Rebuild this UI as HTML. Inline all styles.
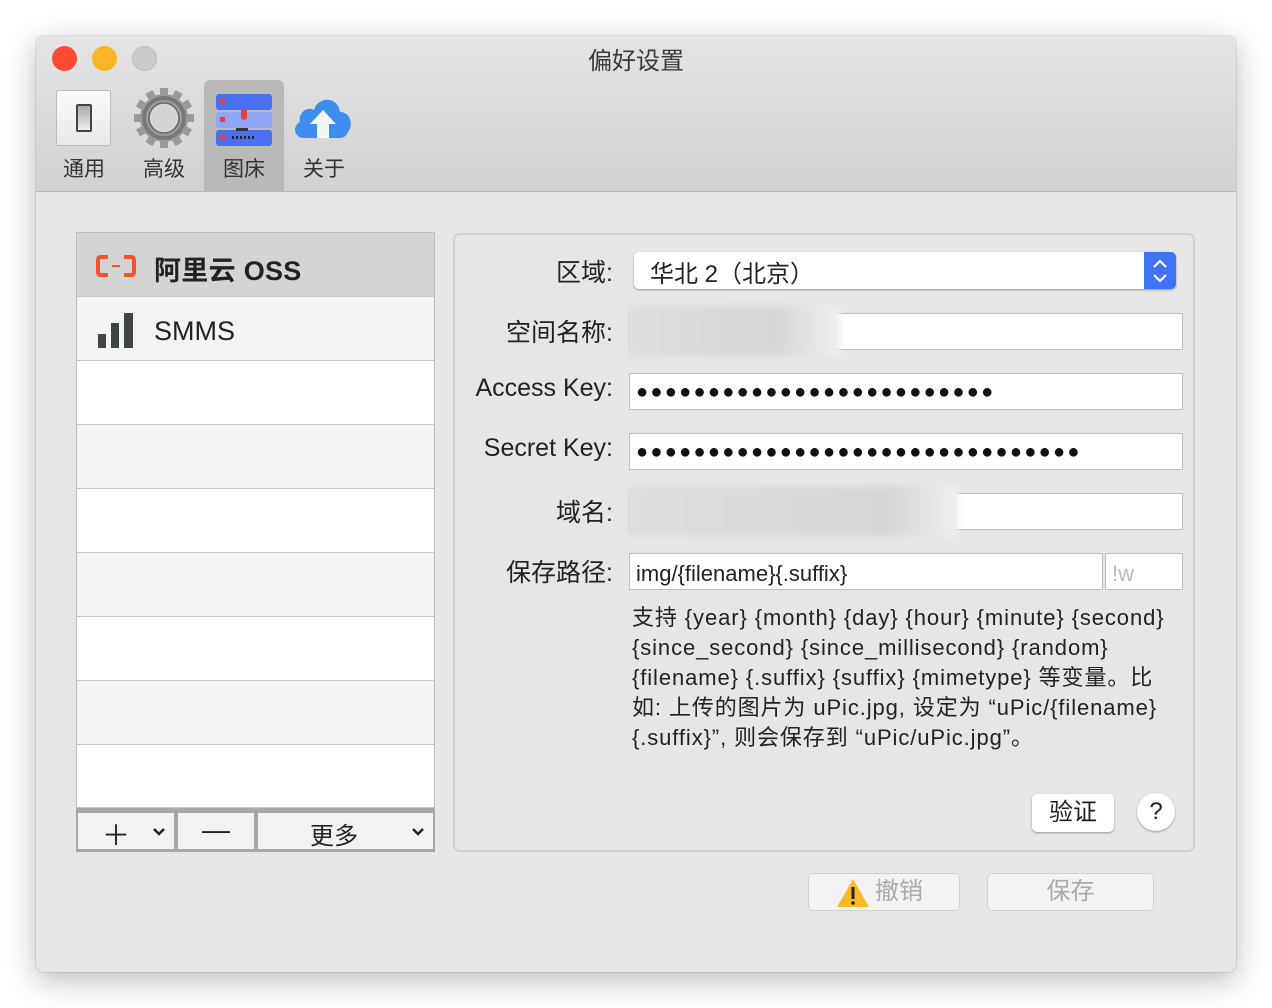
<!DOCTYPE html>
<html><head><meta charset="utf-8"><style>
*{margin:0;padding:0;box-sizing:border-box}
body{width:1272px;height:1008px;background:#fff;position:relative;overflow:hidden;font-family:"Liberation Sans","Noto Sans CJK SC",sans-serif;color:#222}
.a{position:absolute}
#win{left:36px;top:36px;width:1200px;height:936px;background:#e6e6e6;border-radius:8px;box-shadow:0 8px 30px rgba(0,0,0,.28),0 0 0 1px rgba(0,0,0,.08);overflow:hidden}
#tb{left:0;top:0;width:1200px;height:156px;background:linear-gradient(#e4e4e4,#d2d2d2);border-bottom:1px solid #b8b8b8}
.dot{width:25px;height:25px;border-radius:50%;top:10px}
.tl{font-size:21px;color:#333;top:117px;width:80px;text-align:center}
.lbl{font-size:25px;color:#222;right:623px;text-align:right;white-space:nowrap}
.inp{background:#fff;border:1px solid #bdbdbd;height:37px}
.pw{font-size:20px;letter-spacing:2.3px;padding:5px 6px;color:#111;line-height:26px;white-space:nowrap;overflow:hidden}
.row{left:41px;width:357px;height:64px;border-bottom:1px solid #c6c6c6}
.desc{left:596px;font-size:22px;letter-spacing:0.9px;white-space:nowrap;color:#222;line-height:30px}
.btn{background:#f2f2f2;border:1px solid #cfcfcf;border-radius:5px;color:#aaa;font-size:24px;text-align:center}
</style></head><body>
<div id="win" class="a">
 <div id="tb" class="a">
  <div class="a dot" style="left:16px;background:#fd4a33"></div>
  <div class="a dot" style="left:56px;background:#fdb528"></div>
  <div class="a dot" style="left:96px;background:#cbcbcb;border:1px solid #bcbcbc"></div>
  <div class="a" style="left:0;width:1200px;top:5px;text-align:center;font-size:24px;color:#3a3a3a">偏好设置</div>
  <div class="a" style="left:168px;top:44px;width:80px;height:112px;background:#b9b9b9;border-radius:6px 6px 0 0"></div>
  <div class="a" style="left:20px;top:54px;width:55px;height:56px;background:linear-gradient(#fafafa,#e8e8e8);border:1px solid #bbb;border-radius:2px"></div>
  <div class="a" style="left:40px;top:68px;width:16px;height:28px;border:2px solid #444;background:linear-gradient(#aaa,#eee);border-radius:2px"></div>
  <svg class="a" style="left:96px;top:50px" width="64" height="64" viewBox="0 0 64 64"><g fill="#9a9a9a"><circle cx="32" cy="32" r="24"/><g id="t"><rect x="28" y="2" width="8" height="12"/></g><use href="#t" transform="rotate(30 32 32)"/><use href="#t" transform="rotate(60 32 32)"/><use href="#t" transform="rotate(90 32 32)"/><use href="#t" transform="rotate(120 32 32)"/><use href="#t" transform="rotate(150 32 32)"/><use href="#t" transform="rotate(180 32 32)"/><use href="#t" transform="rotate(210 32 32)"/><use href="#t" transform="rotate(240 32 32)"/><use href="#t" transform="rotate(270 32 32)"/><use href="#t" transform="rotate(300 32 32)"/><use href="#t" transform="rotate(330 32 32)"/></g><circle cx="32" cy="32" r="20" fill="none" stroke="#777" stroke-width="4"/><circle cx="32" cy="32" r="15" fill="#d4d4d4" stroke="#666" stroke-width="1.5"/></svg>
  <div class="a" style="left:180px;top:58px;width:56px;height:16px;background:#4a6ff0;border-radius:3px"></div>
  <div class="a" style="left:180px;top:76px;width:56px;height:16px;background:#8ea6f5;border-radius:3px"></div>
  <div class="a" style="left:180px;top:94px;width:56px;height:16px;background:#4a6ff0;border-radius:3px"></div>
  <div class="a" style="left:184px;top:63px;width:5px;height:5px;background:#f04030"></div>
  <div class="a" style="left:184px;top:81px;width:5px;height:5px;background:#f04030"></div>
  <div class="a" style="left:184px;top:99px;width:5px;height:5px;background:#f04030"></div>
  <div class="a" style="left:205px;top:74px;width:6px;height:10px;background:#f04030;border-radius:0 0 3px 3px"></div>
  <div class="a" style="left:200px;top:92px;width:12px;height:3px;background:#333"></div>
  <div class="a" style="left:196px;top:100px;width:24px;height:3px;background:repeating-linear-gradient(90deg,#222 0 2px,transparent 2px 4px)"></div>
  <svg class="a" style="left:256px;top:56px" width="62" height="50" viewBox="0 0 62 50"><path d="M12 46 C2 46 0 34 8 30 C6 20 16 14 22 18 C26 4 46 4 48 20 C58 20 62 32 56 40 C54 44 52 46 48 46Z" fill="#3d8ef0"/><path d="M31 18 L44 32 L37 32 L37 46 L25 46 L25 32 L18 32Z" fill="#f4f6fa"/></svg>
  <div class="a tl" style="left:8px">通用</div>
  <div class="a tl" style="left:88px">高级</div>
  <div class="a tl" style="left:168px">图床</div>
  <div class="a tl" style="left:248px">关于</div>
 </div>
 <div class="a" style="left:40px;top:196px;width:359px;height:620px;border:1px solid #bdbdbd;background:#fff"></div>
 <div class="a row" style="top:197px;background:#d4d4d4"></div>
 <div class="a row" style="top:261px;background:#f2f3f3"></div>
 <div class="a row" style="top:325px;background:#fff"></div>
 <div class="a row" style="top:389px;background:#f2f3f3"></div>
 <div class="a row" style="top:453px;background:#fff"></div>
 <div class="a row" style="top:517px;background:#f2f3f3"></div>
 <div class="a row" style="top:581px;background:#fff"></div>
 <div class="a row" style="top:645px;background:#f2f3f3"></div>
 <div class="a row" style="top:709px;background:#fff;height:63px"></div>
 <svg class="a" style="left:60px;top:219px" width="40" height="22" viewBox="0 0 40 22"><path d="M12 2 H5 Q2 2 2 5 V17 Q2 20 5 20 H12 M28 2 H35 Q38 2 38 5 V17 Q38 20 35 20 H28" stroke="#f5542b" stroke-width="4" fill="none"/><rect x="16" y="10" width="8" height="2" fill="#f5542b"/></svg>
 <div class="a" style="left:118px;top:213px;font-size:27px;color:#222;font-weight:bold;letter-spacing:0.3px">阿里云 OSS</div>
 <div class="a" style="left:62px;top:298px;width:8px;height:14px;background:#404540"></div>
 <div class="a" style="left:75px;top:287px;width:8px;height:25px;background:#404540"></div>
 <div class="a" style="left:88px;top:277px;width:9px;height:35px;background:#404540"></div>
 <div class="a" style="left:118px;top:280px;font-size:27px;color:#222">SMMS</div>
 <div class="a" style="left:40px;top:772px;width:359px;height:44px;background:#a8a8a8"></div>
 <div class="a" style="left:42px;top:777px;width:96px;height:36px;background:#f2f2f2"></div>
 <div class="a" style="left:142px;top:777px;width:76px;height:36px;background:#f2f2f2"></div>
 <div class="a" style="left:222px;top:777px;width:175px;height:36px;background:#f2f2f2"></div>
 <div class="a" style="left:66px;top:778px;font-size:28px;color:#222">＋</div>
 <svg class="a" style="left:116px;top:791px" width="14" height="10" viewBox="0 0 14 10"><path d="M2 2 L7 7 L12 2" stroke="#222" stroke-width="2.5" fill="none"/></svg>
 <div class="a" style="left:166px;top:778px;font-size:28px;color:#222">—</div>
 <div class="a" style="left:274px;top:780px;font-size:24px;color:#222">更多</div>
 <svg class="a" style="left:375px;top:791px" width="14" height="10" viewBox="0 0 14 10"><path d="M2 2 L7 7 L12 2" stroke="#222" stroke-width="2.5" fill="none"/></svg>
 <div class="a" style="left:417px;top:197px;width:742px;height:619px;border:2px solid #d0d0d0;border-radius:7px;background:#e6e6e6"></div>
 <div class="a lbl" style="top:217px">区域:</div>
 <div class="a" style="left:598px;top:216px;width:542px;height:37px;background:#fff;border-radius:5px;box-shadow:0 1px 2px rgba(0,0,0,.35)"></div>
 <div class="a" style="left:1108px;top:216px;width:32px;height:37px;background:#3f73f4;border-radius:0 5px 5px 0"></div>
 <svg class="a" style="left:1114px;top:220px" width="20" height="30" viewBox="0 0 20 30"><path d="M4 11 L10 5 L16 11 M4 19 L10 25 L16 19" stroke="#fff" stroke-width="2.2" fill="none"/></svg>
 <div class="a" style="left:614px;top:218px;font-size:24px;color:#222">华北 2（北京）</div>
 <div class="a lbl" style="top:277px">空间名称:</div>
 <div class="a inp" style="left:593px;top:277px;width:554px"></div>
 <div class="a" style="left:592px;top:270px;width:212px;height:50px;background:linear-gradient(90deg,#ddd,#d6d6d6 70%,#eee);filter:blur(3px)"></div>
 <div class="a lbl" style="top:338px">Access Key:</div>
 <div class="a inp pw" style="left:593px;top:337px;width:554px">●●●●●●●●●●●●●●●●●●●●●●●●●</div>
 <div class="a lbl" style="top:398px">Secret Key:</div>
 <div class="a inp pw" style="left:593px;top:397px;width:554px">●●●●●●●●●●●●●●●●●●●●●●●●●●●●●●●</div>
 <div class="a lbl" style="top:457px">域名:</div>
 <div class="a inp" style="left:593px;top:457px;width:554px"></div>
 <div class="a" style="left:592px;top:450px;width:330px;height:50px;background:linear-gradient(90deg,#ddd,#d6d6d6 80%,#eee);filter:blur(3px)"></div>
 <div class="a lbl" style="top:517px">保存路径:</div>
 <div class="a inp" style="left:593px;top:517px;width:474px;font-size:22px;padding:7px 6px;color:#222">img/{filename}{.suffix}</div>
 <div class="a inp" style="left:1069px;top:517px;width:78px;font-size:22px;padding:7px 6px;color:#bbb">!w</div>
 <div class="a desc" style="top:567px">支持 {year} {month} {day} {hour} {minute} {second}</div>
 <div class="a desc" style="top:597px">{since_second} {since_millisecond} {random}</div>
 <div class="a desc" style="top:627px">{filename} {.suffix} {suffix} {mimetype} 等变量。比</div>
 <div class="a desc" style="top:657px">如: 上传的图片为 uPic.jpg, 设定为 “uPic/{filename}</div>
 <div class="a desc" style="top:687px">{.suffix}”, 则会保存到 “uPic/uPic.jpg”。</div>
 <div class="a" style="left:996px;top:758px;width:82px;height:38px;background:#fff;border-radius:5px;box-shadow:0 1px 2px rgba(0,0,0,.35);text-align:center;font-size:24px;line-height:38px;color:#222">验证</div>
 <div class="a" style="left:1101px;top:757px;width:38px;height:38px;background:#fff;border-radius:50%;box-shadow:0 1px 2px rgba(0,0,0,.35);text-align:center;font-size:24px;line-height:38px;color:#222">?</div>
 <div class="a btn" style="left:772px;top:837px;width:152px;height:38px;line-height:36px;padding-left:30px">撤销</div>
 <svg class="a" style="left:800px;top:842px" width="34" height="30" viewBox="0 0 34 30"><path d="M17 1 L33 29 H1Z" fill="#fbb928"/><rect x="15.5" y="9" width="3" height="12" fill="#222"/><circle cx="17" cy="25" r="1.8" fill="#222"/></svg>
 <div class="a btn" style="left:951px;top:837px;width:167px;height:38px;line-height:36px">保存</div>
</div>
</body></html>
